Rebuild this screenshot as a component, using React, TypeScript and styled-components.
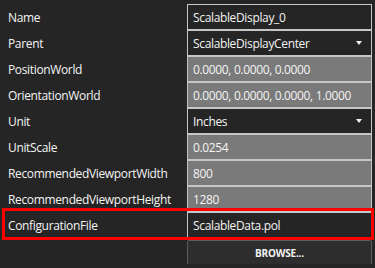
import styled, { createGlobalStyle } from "styled-components";

const GlobalStyle = createGlobalStyle`
  html, body {
    margin: 0;
    background: #252525;
  }
  body {
    font-family: "Open Sans", "Noto Sans", sans-serif;
    font-size: 12px;
    letter-spacing: -0.35px;
    color: #f4f4f4;
  }
`;

type Field = {
  label: string;
  value: string;
  kind: "text" | "readonly" | "select";
  highlight?: boolean;
};

const fields: Field[] = [
  { label: "Name", value: "ScalableDisplay_0", kind: "text" },
  { label: "Parent", value: "ScalableDisplayCenter", kind: "select" },
  { label: "PositionWorld", value: "0.0000, 0.0000, 0.0000", kind: "readonly" },
  { label: "OrientationWorld", value: "0.0000, 0.0000, 0.0000, 1.0000", kind: "readonly" },
  { label: "Unit", value: "Inches", kind: "select" },
  { label: "UnitScale", value: "0.0254", kind: "readonly" },
  { label: "RecommendedViewportWidth", value: "800", kind: "readonly" },
  { label: "RecommendedViewportHeight", value: "1280", kind: "readonly" },
  { label: "ConfigurationFile", value: "ScalableData.pol", kind: "text", highlight: true },
];

function App() {
  return (
    <>
      <GlobalStyle />
      <Panel>
        {fields.map((f) => (
          <Row key={f.label} $highlight={f.highlight}>
            <Label>{f.label}</Label>
            <Value $readonly={f.kind === "readonly"}>
              <span>{f.value}</span>
              {f.kind === "select" && <Arrow />}
            </Value>
          </Row>
        ))}
        <Row>
          <span />
          <BrowseButton>BROWSE...</BrowseButton>
        </Row>
      </Panel>
    </>
  );
}

const Panel = styled.div`
  width: 372px;
  padding-top: 4px;
  display: flex;
  flex-direction: column;
`;

const Row = styled.div<{ $highlight?: boolean }>`
  position: relative;
  display: grid;
  grid-template-columns: 187px 185px;
  height: 26px;

  ${(p) =>
    p.$highlight &&
    `
    &::after {
      content: "";
      position: absolute;
      left: 2px;
      right: -2px;
      top: -4px;
      bottom: -2px;
      border: 3px solid #ff0000;
      pointer-events: none;
    }
  `}
`;

const Label = styled.div`
  display: flex;
  align-items: center;
  padding-left: 8px;
  white-space: nowrap;
`;

const Value = styled.div<{ $readonly?: boolean }>`
  box-sizing: border-box;
  display: flex;
  align-items: center;
  justify-content: space-between;
  padding: 0 9px 0 5px;
  border: 1px solid #c6c6c6;
  background: ${(p) => (p.$readonly ? "#7a7a7a" : "#252525")};
  white-space: nowrap;
  overflow: hidden;
`;

const Arrow = styled.i`
  width: 0;
  height: 0;
  border-left: 3px solid transparent;
  border-right: 3px solid transparent;
  border-top: 4px solid #f2f2f2;
`;

const BrowseButton = styled.button`
  box-sizing: border-box;
  margin-top: 2px;
  height: 25px;
  border: 1px solid #5c5c5c;
  border-radius: 2px;
  background: #2d2d2d;
  color: #f2f2f2;
  font-family: "Open Sans", "Noto Sans", sans-serif;
  font-size: 10px;
  font-weight: 700;
  letter-spacing: -0.2px;
  padding: 0;
`;

export default App;
